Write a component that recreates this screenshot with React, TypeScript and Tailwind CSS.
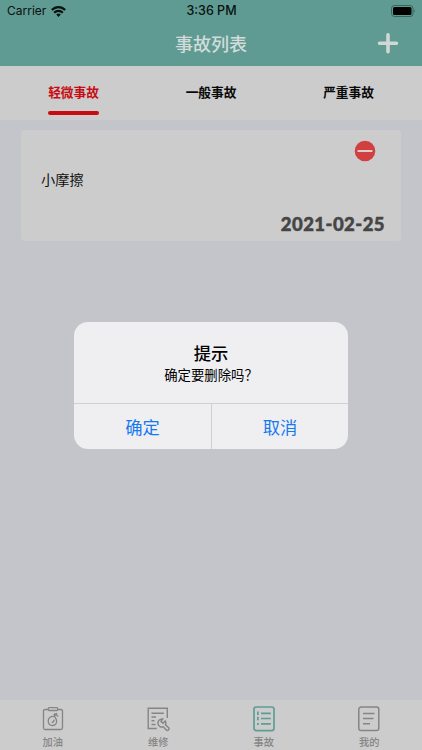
import React from 'react';

const tabs = ['轻微事故', '一般事故', '严重事故'];

function StatusBar() {
  return (
    <div className="grid h-[22px] grid-cols-3 items-center pl-[7px] pr-[6px] font-['Inter','Liberation_Sans',sans-serif] text-[12.500px] leading-[22px] text-[#0a1110]">
      <div className="flex items-center gap-[5px]">
        <span className="w-[39px] whitespace-nowrap text-[12px]">Carrier</span>
        <svg className="h-[11px] w-[15px]" viewBox="0 0 15 11" fill="none" stroke="currentColor" strokeWidth="2.200">
          <path d="M0.8 4.1C4.5 0.1 10.5 0.1 14.2 4.1" />
          <path d="M3.2 6.7C5.6 4.2 9.4 4.2 11.8 6.7" />
          <path d="M5.2 8.5C6.5 7.3 8.5 7.3 9.8 8.5L7.5 10.9Z" fill="currentColor" stroke="none" />
        </svg>
      </div>
      <div className="whitespace-nowrap text-center font-medium">3:36 PM</div>
      <svg className="h-[12px] w-[25px] justify-self-end" viewBox="0 0 25 12">
        <rect x="0.5" y="0.5" width="21.5" height="11" rx="3" fill="none" stroke="#37645d" />
        <rect x="2" y="2" width="18.5" height="8" rx="1.5" fill="#000" />
        <path d="M23.3 4.2Q25 6 23.3 7.8Z" fill="#37645d" />
      </svg>
    </div>
  );
}

function FuelIcon() {
  return (
    <svg className="h-[26px] w-[24px]" viewBox="0 0 24 26" fill="none" stroke="currentColor" strokeWidth="1.3">
      <path d="M7 3.500H4Q2.500 3.500 2.500 5V22Q2.500 23.500 4 23.500H20Q21.500 23.500 21.500 22V5Q21.500 3.500 20 3.500H17" />
      <rect x="7.300" y="1.700" width="9.400" height="2.800" rx="1" />
      <path d="M13.700 10.700C10 9.500 7 12 7.200 15.200C7.400 18 9.300 19.500 11.500 19.500C14.500 19.500 16.300 17 15.500 14.200C15.200 13.200 14.600 12.300 13.700 10.700Z" />
      <path d="M10.800 16.500Q13 16.300 13 13.800M13.200 10.400L16.200 7.200M14.300 7.800L17.200 10.600M12.700 9L14.200 7.500" />
    </svg>
  );
}

function RepairIcon() {
  return (
    <svg className="h-[26px] w-[24px]" viewBox="0 0 24 26" fill="none" stroke="currentColor" strokeWidth="1.400">
      <path d="M10.800 22.500H2.200V2.200H21.300V12M5.500 7.300H17.800M5.500 11H10M5.500 14.800H8.500M5.500 18.500H9.500" />
      <path d="M16.800 13C13.800 12.500 11.400 15.100 12 17.900C12.500 20.300 15 21.600 17.200 20.800L20.300 24Q21.300 24.900 22.500 23.900Q23.500 22.800 22.600 21.700L19.500 18.800C20.200 17 19.900 15.900 19.200 14.900L17.100 17.200L14.900 15.300Z" />
    </svg>
  );
}

function AccidentIcon() {
  return (
    <svg className="h-[26px] w-[24px] text-[#5d9d92]" viewBox="0 0 24 26" fill="none" stroke="currentColor" strokeWidth="1.700">
      <rect x="2" y="1" width="20" height="23.600" rx="2.300" />
      <path d="M9 7.300H18.800M9 12.500H18.800M9 17.800H18.800M5.900 5.500V8.900M5.900 10.800V14.200M5.900 17V19" />
    </svg>
  );
}

function ProfileIcon() {
  return (
    <svg className="h-[26px] w-[24px]" viewBox="0 0 24 26" fill="none" stroke="currentColor" strokeWidth="1.500">
      <rect x="1.800" y="1" width="20" height="23.600" rx="2.300" />
      <path d="M6 7.500H17.500M6 12.500H16.500M6 17.700H13" />
    </svg>
  );
}

const nav = [
  { label: '加油', Icon: FuelIcon },
  { label: '维修', Icon: RepairIcon },
  { label: '事故', Icon: AccidentIcon },
  { label: '我的', Icon: ProfileIcon },
];

export default function App() {
  return (
    <div className="relative flex h-[750px] w-[422px] flex-col overflow-hidden bg-[#c4c5ca] font-['Noto_Sans_CJK_SC',sans-serif]">
      <header className="h-[66px] shrink-0 bg-[#5f9b92]">
        <StatusBar />
        <div className="grid h-[42px] grid-cols-[1fr_auto_1fr] items-center">
          <h1 className="col-start-2 text-[18px] font-medium leading-[40px] text-[#d2dcda]">事故列表</h1>
          <button aria-label="添加" className="mr-[23px] justify-self-end">
            <svg className="h-[22px] w-[22px]" viewBox="0 0 22 22" stroke="#d0d8d6" strokeWidth="3.600" strokeLinecap="round">
              <path d="M2.500 11.300H19.500M11 2.800V19.800" />
            </svg>
          </button>
        </div>
      </header>

      <nav className="flex h-[54px] shrink-0 justify-between bg-[#ccc] px-[48px] pt-[16px] text-[12.700px] font-bold leading-5 text-[#090909]">
        {tabs.map((t, i) => (
          <button key={t} className={i === 0 ? 'flex w-[51px] flex-col items-center whitespace-nowrap text-[#c80c14]' : 'flex w-[51px] flex-col items-center whitespace-nowrap'}>
            <span>{t}</span>
            {i === 0 && <span className="mt-[9px] h-[4px] w-full rounded-full bg-[#c80c14]" />}
          </button>
        ))}
      </nav>

      <main className="grow px-[21px] pt-[10px]">
        <article className="flex h-[111px] flex-col rounded-[4px] bg-[#ccc] pl-[20px] pr-[16px] pt-[10px]">
          <button aria-label="删除" className="mr-[9px] h-[22px] self-end">
            <svg className="h-[22px] w-[22px]" viewBox="0 0 22 22">
              <circle cx="11" cy="11" r="10.300" fill="#d23f3f" />
              <path d="M4.200 11H17.800" stroke="#ddcdcd" strokeWidth="1.800" strokeLinecap="round" />
            </svg>
          </button>
          <p className="mt-[7px] text-[14.200px] leading-5 text-[#111]">小摩擦</p>
          <time className="mt-[23px] self-end font-['Lato',sans-serif] text-[18.500px] font-black leading-6 tracking-[0.450px] text-[#454545] [-webkit-text-stroke:0.500px_#454545]">2021-02-25</time>
        </article>
      </main>

      <footer className="grid h-[50px] shrink-0 grid-cols-4 bg-[#ccc] text-[10.200px] text-[#858585]">
        {nav.map(({ label, Icon }) => (
          <div key={label} className="flex flex-col items-center pt-[6px]">
            <Icon />
            <span className="mt-[3px] font-medium leading-[14px]">{label}</span>
          </div>
        ))}
      </footer>

      <div role="dialog" className="absolute left-[74px] top-[322px] flex h-[127px] w-[274px] flex-col overflow-hidden rounded-[14px] bg-[#efeff2]">
        <div className="flex h-[82px] shrink-0 flex-col items-center border-b border-[#d0d0d3] pt-[19px] text-black">
          <h2 className="text-[17.300px] font-medium leading-6">提示</h2>
          <p className="text-[13.400px] leading-[18px]">确定要删除吗？</p>
        </div>
        <div className="grid grow grid-cols-2 text-[17.300px] text-[#1679ee]">
          <button>确定</button>
          <button className="border-l border-[#d0d0d3]">取消</button>
        </div>
      </div>
    </div>
  );
}
